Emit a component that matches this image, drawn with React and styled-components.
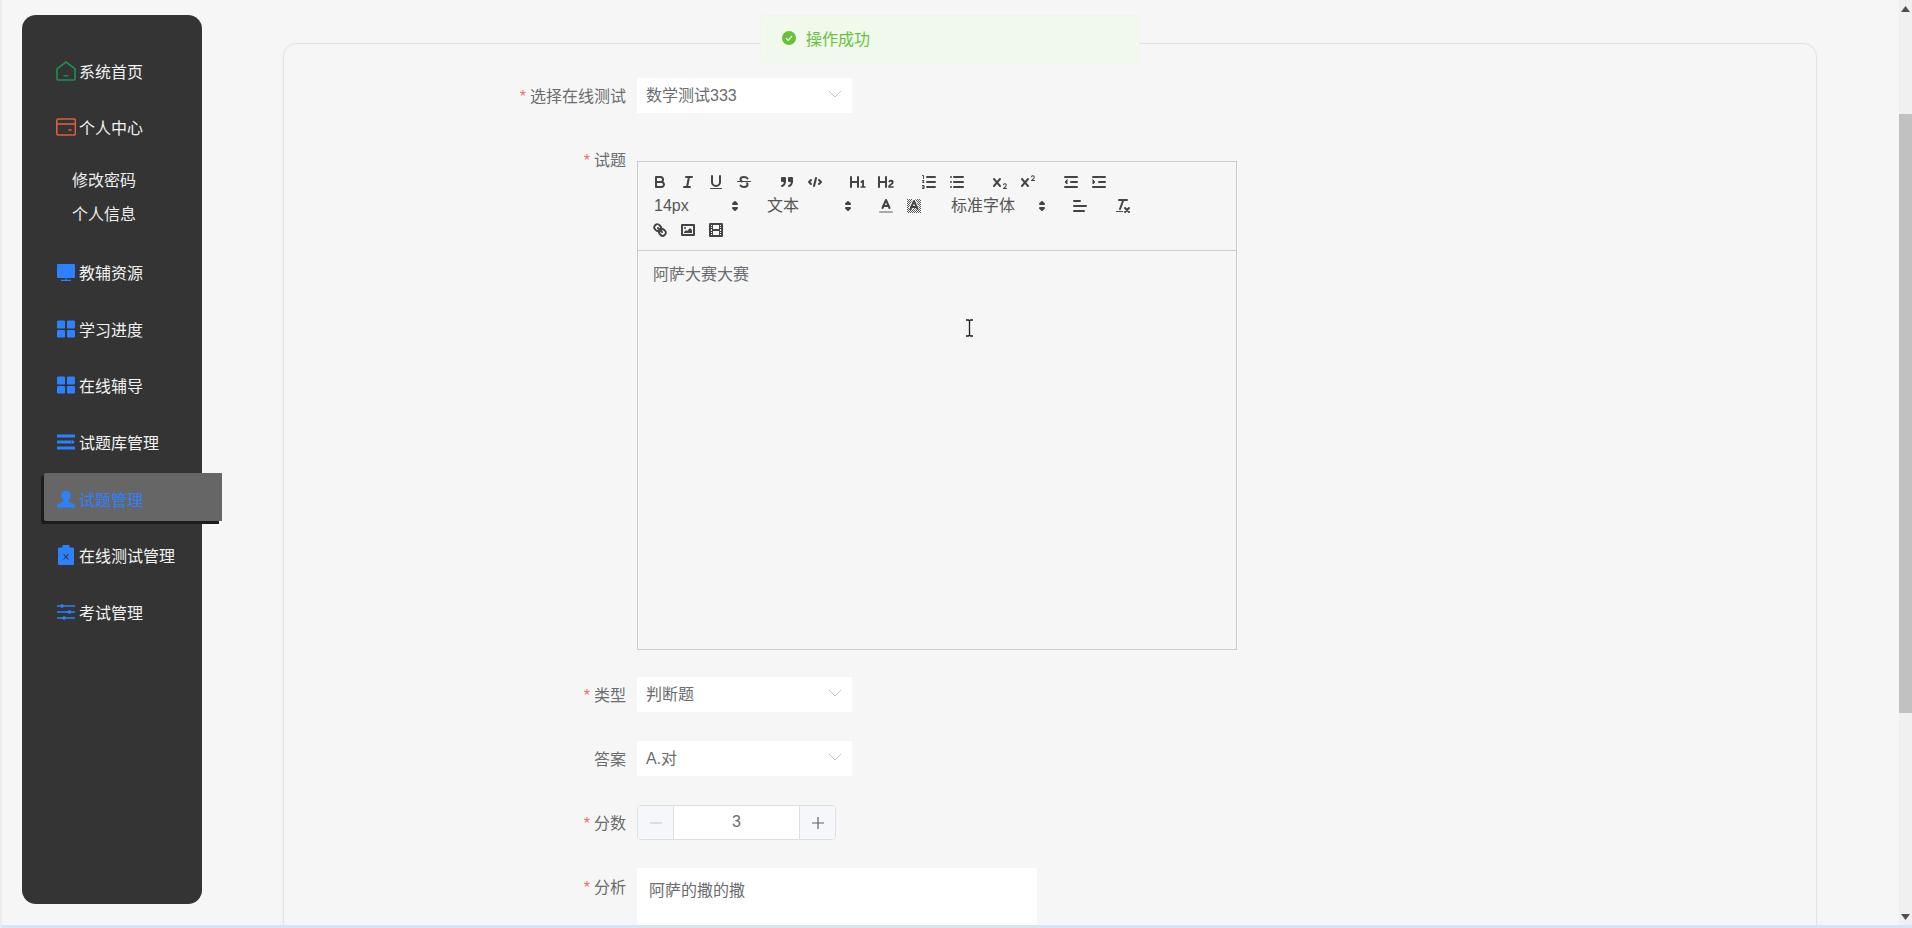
import styled, { createGlobalStyle } from "styled-components";

const GlobalStyle = createGlobalStyle`
  html, body {
    margin: 0;
    height: 100%;
    overflow: hidden;
    background: #f6f6f6;
  }
  * {
    box-sizing: border-box;
  }
`;

const FONT = `"Liberation Sans", "Noto Sans CJK SC", sans-serif`;

const Page = styled.div`
  position: relative;
  width: 1912px;
  height: 928px;
  display: flex;
  flex-direction: column;
  overflow: hidden;
  background: #f6f6f6;
  border-left: 2px solid #ececec;
  font-family: ${FONT};
  font-size: 16px;
  color: #6a6c70;
`;
const Content = styled.div`
  flex: 1;
  min-height: 0;
  display: flex;
  padding-left: 20px;
`;
const BottomStripe = styled.div`
  height: 3px;
  background: #d6e6f2;
`;

/* sidebar */
const Sidebar = styled.nav`
  flex: 0 0 180px;
  width: 180px;
  min-width: 0;
  height: 889px;
  margin-top: 15px;
  padding-top: 30px;
  background: #343434;
  border-radius: 14px;
`;
const MenuItem = styled.div`
  width: 178px;
  height: ${(p) => (p.$active ? "48px" : "51px")};
  margin: 0 0 ${(p) => (p.$active ? "8.6px" : "5.6px")} 22px;
  padding-left: 12px;
  display: flex;
  align-items: center;
  gap: 3px;
  padding-top: ${(p) => (p.$active ? "5px" : "0")};
  color: ${(p) => (p.$active ? "#2d81ff" : "#f2f2f2")};
  background: ${(p) => (p.$active ? "#666666" : "transparent")};
  box-shadow: ${(p) => (p.$active ? "-3px 3px 0 #1c1c1c" : "none")};
  border-radius: ${(p) => (p.$active ? "2px 0 0 2px" : "0")};
`;
const SubMenu = styled.div`
  padding: 11px 0 15px 50px;
  margin-top: -5.6px;
`;
const SubItem = styled.div`
  height: 34px;
  line-height: 34px;
  color: #eeeeee;
`;
const NavIcon = styled.svg`
  flex: 0 0 20px;
  width: 20px;
  height: 20px;
  color: ${(p) => p.$color || "#2d81ff"};
`;

/* form card */
const Main = styled.main`
  flex: 0 0 1534px;
  margin: 28px 0 0 81px;
  padding-top: 15px;
`;
const Card = styled.section`
  height: 100%;
  padding-top: 34px;
  border: 1px solid #e3e3e3;
  border-bottom: none;
  border-radius: 14px 14px 0 0;
  box-shadow: 0 0 3px #efefef;
`;
const Row = styled.div`
  display: flex;
  align-items: ${(p) => (p.$top ? "flex-start" : "center")};
  margin-bottom: ${(p) => p.$gap || 28}px;
`;
const Label = styled.label`
  flex: 0 0 353px;
  text-align: right;
  padding-right: 11px;
  line-height: ${(p) => (p.$top === undefined ? "normal" : "0")};
  padding-top: ${(p) => p.$top || 0}px;
  padding-bottom: ${(p) => (p.$top === undefined ? "2px" : "0")};
`;
const Star = styled.span`
  color: #f56c6c;
  margin-right: 4px;
`;
const Select = styled.div`
  width: 215px;
  height: 35px;
  padding: 0 10px 4px 9px;
  display: flex;
  align-items: center;
  justify-content: space-between;
  background: #ffffff;
`;

/* rich text editor */
const Editor = styled.div`
  width: 600px;
  height: 489px;
  display: flex;
  flex-direction: column;
  border: 1px solid #cccccc;
`;
const Toolbar = styled.div`
  padding: 8px;
  border-bottom: 1px solid #cccccc;
`;
const ToolRow = styled.div`
  display: flex;
  gap: 15px;
  height: 24px;
`;
const ToolGroup = styled.div`
  display: flex;
`;
const ToolButton = styled.span`
  width: 28px;
  height: 24px;
  padding: 3px 5px;
  display: block;
`;
const QlIcon = styled.svg`
  display: block;
  width: 18px;
  height: 18px;
  .s {
    fill: none;
    stroke: #444444;
    stroke-width: 2;
    stroke-linecap: round;
    stroke-linejoin: round;
  }
  .t {
    fill: none;
    stroke: #444444;
    stroke-width: 1;
    stroke-linecap: round;
    stroke-linejoin: round;
  }
  .f {
    fill: #444444;
  }
`;
const Picker = styled.div`
  position: relative;
  width: ${(p) => p.$width}px;
  height: 24px;
  line-height: 24px;
  padding-left: 8px;
  color: #555555;
  svg {
    position: absolute;
    right: 0;
    top: 3px;
  }
`;
const EditorBody = styled.div`
  position: relative;
  flex: 1;
  padding: 12px 15px;
  line-height: 24px;
`;
const TextCursor = styled.svg`
  position: absolute;
  left: 327px;
  top: 68px;
  width: 9px;
  height: 18px;
`;

/* number input */
const NumberBox = styled.div`
  width: 199px;
  height: 35px;
  display: flex;
  border: 1px solid #dcdfe6;
  border-radius: 4px;
  overflow: hidden;
  background: #ffffff;
`;
const StepButton = styled.div`
  flex: 0 0 36px;
  display: flex;
  align-items: center;
  justify-content: center;
  background: #f5f7fa;
  color: ${(p) => (p.$disabled ? "#c0c4cc" : "#606266")};
  ${(p) => (p.$side === "left" ? "border-right" : "border-left")}: 1px solid #dcdfe6;
`;
const NumberValue = styled.div`
  flex: 1;
  text-align: center;
  line-height: 31px;
`;
const TextArea = styled.div`
  width: 400px;
  height: 100px;
  padding: 11px 12px;
  line-height: 24px;
  background: #ffffff;
`;

/* window scrollbar */
const Scrollbar = styled.div`
  flex: 0 0 13px;
  margin-left: auto;
  display: flex;
  flex-direction: column;
  background: #f0f0f0;
`;
const ScrollArrow = styled.div`
  flex: 0 0 17px;
  display: flex;
  align-items: center;
  justify-content: center;
`;
const ScrollTrack = styled.div`
  flex: 1;
  padding-top: 97px;
`;
const ScrollThumb = styled.div`
  height: 599px;
  background: #c1c1c1;
`;

/* message toast */
const Toast = styled.div`
  position: absolute;
  left: 758px;
  top: 15px;
  width: 379px;
  height: 48px;
  padding: 0 0 2px 20px;
  display: flex;
  align-items: center;
  gap: 9px;
  color: #67c23a;
  background: #f0f9eb;
  border: 1px solid #eef7e8;
  border-radius: 4px;
`;

const Chevron = () => (
  <svg width="14" height="14" viewBox="0 0 14 14">
    <path d="M1 4l6 6 6-6" fill="none" stroke="#c0c4cc" strokeWidth="1" />
  </svg>
);

const NavSvg = ({ color, children }) => (
  <NavIcon $color={color} viewBox="0 0 20 20">
    {children}
  </NavIcon>
);

const HomeIcon = () => (
  <NavSvg color="#1e9150">
    <path d="M10 1 19 7.800V18a1 1 0 0 1-1 1H2a1 1 0 0 1-1-1V7.800Z" fill="none" stroke="currentColor" strokeWidth="1.600" strokeLinejoin="round" />
    <path d="M7.500 14.200c1.500.9 3.500.9 5 0" fill="none" stroke="currentColor" strokeWidth="1.300" />
  </NavSvg>
);
const CardIcon = () => (
  <NavSvg color="#d9603b">
    <rect x="0.800" y="2" width="18.600" height="16" rx="1.600" fill="none" stroke="currentColor" strokeWidth="1.600" />
    <path d="M1 7h18" stroke="currentColor" strokeWidth="1.600" />
    <path d="M12.500 13h3" stroke="currentColor" strokeWidth="1.600" />
  </NavSvg>
);
const MonitorIcon = () => (
  <NavSvg>
    <path d="M2 2h16a1 1 0 0 1 1 1v12a1 1 0 0 1-1 1H2a1 1 0 0 1-1-1V3a1 1 0 0 1 1-1Z" fill="currentColor" />
    <path d="M10 16v2M5 18.400h10" stroke="currentColor" strokeWidth="1.100" />
  </NavSvg>
);
const GridIcon = () => (
  <NavSvg>
    <rect x="1" y="1.500" width="8" height="8" rx="1.200" fill="currentColor" />
    <rect x="11" y="1.500" width="8" height="8" rx="1.200" fill="currentColor" />
    <rect x="1" y="11" width="8" height="7.500" rx="1.200" fill="currentColor" />
    <rect x="11" y="11" width="8" height="7.500" rx="1.200" fill="currentColor" />
  </NavSvg>
);
const ListIcon = () => (
  <NavSvg>
    <path d="M1 2.500h18v3H1ZM1 8.500h14v3H1ZM1 14.500h18v3H1Z" fill="currentColor" />
    <path d="M15.500 7.500 19 10l-3.500 2.500Z" fill="currentColor" />
  </NavSvg>
);
const UserIcon = () => (
  <NavSvg>
    <circle cx="10" cy="6.500" r="4.800" fill="currentColor" />
    <path d="M7.600 10.500h4.800l.6 2.500 5 2c.7.3 1 .9 1 1.600V18.500H.9V16.600c0-.7.3-1.300 1-1.600l5-2Z" fill="currentColor" />
  </NavSvg>
);
const ClipboardIcon = () => (
  <NavSvg>
    <path d="M6.500 0h7v3h-7Z" fill="currentColor" />
    <rect x="2" y="2.500" width="16" height="17.500" rx="1" fill="currentColor" />
    <path d="M7.500 9l5 5.500M12.500 9l-5 5.500" stroke="#343434" strokeWidth="1.100" />
  </NavSvg>
);
const SlidersIcon = () => (
  <NavSvg>
    <path d="M1 4h18M1 10h18M1 16h18" stroke="currentColor" strokeWidth="1.300" />
    <rect x="4.500" y="2.300" width="3" height="3.400" rx="1" fill="currentColor" />
    <rect x="12" y="8.300" width="3" height="3.400" rx="1" fill="currentColor" />
    <rect x="6.500" y="14.300" width="3" height="3.400" rx="1" fill="currentColor" />
  </NavSvg>
);

const Ql = ({ children }) => (
  <ToolButton>
    <QlIcon viewBox="0 0 18 18">{children}</QlIcon>
  </ToolButton>
);

const PickerArrows = () => (
  <QlIcon viewBox="0 0 18 18">
    <polygon className="s f" points="7 11 9 13 11 11 7 11" />
    <polygon className="s f" points="7 7 9 5 11 7 7 7" />
  </QlIcon>
);

const X_MARK = "M9.65,5.241a1,1,0,0,0-1.409.108L6,7.964,3.759,5.349A1,1,0,0,0,2.192,6.59178Q2.21541,6.6213,2.241,6.649L4.684,9.5,2.241,12.35A1,1,0,0,0,3.71,13.70722q0.02557-.02768.049-0.05722L6,11.036,8.241,13.65a1,1,0,1,0,1.567-1.24277Q9.78459,12.3777,9.759,12.35L7.316,9.5,9.759,6.651A1,1,0,0,0,9.65,5.241Z";

const menu = [
  { label: "教辅资源", icon: <MonitorIcon /> },
  { label: "学习进度", icon: <GridIcon /> },
  { label: "在线辅导", icon: <GridIcon /> },
  { label: "试题库管理", icon: <ListIcon /> },
  { label: "试题管理", icon: <UserIcon />, active: true },
  { label: "在线测试管理", icon: <ClipboardIcon /> },
  { label: "考试管理", icon: <SlidersIcon /> },
];

const RequiredLabel = ({ required, top, children }) => (
  <Label $top={top}>
    {required && <Star>*</Star>}
    {children}
  </Label>
);

const App = () => {
  return (
    <Page>
      <GlobalStyle />
      <Content>
        <Sidebar>
          <MenuItem>
            <HomeIcon />
            系统首页
          </MenuItem>
          <MenuItem>
            <CardIcon />
            个人中心
          </MenuItem>
          <SubMenu>
            <SubItem>修改密码</SubItem>
            <SubItem>个人信息</SubItem>
          </SubMenu>
          {menu.map((item) => (
            <MenuItem key={item.label} $active={item.active}>
              {item.icon}
              {item.label}
            </MenuItem>
          ))}
        </Sidebar>

        <Main>
          <Card>
            <Row $gap={48}>
              <RequiredLabel required>选择在线测试</RequiredLabel>
              <Select>
                数学测试333
                <Chevron />
              </Select>
            </Row>

            <Row $top $gap={27}>
              <RequiredLabel required top={0}>
                试题
              </RequiredLabel>
              <Editor>
                <Toolbar>
                  <ToolRow>
                    <ToolGroup>
                      <Ql>
                        <path className="s" d="M5,4H9.5A2.5,2.5,0,0,1,12,6.5v0A2.5,2.5,0,0,1,9.5,9H5A0,0,0,0,1,5,9V4A0,0,0,0,1,5,4Z" />
                        <path className="s" d="M5,9h5.5A2.5,2.5,0,0,1,13,11.5v0A2.5,2.5,0,0,1,10.5,14H5a0,0,0,0,1,0,0V9A0,0,0,0,1,5,9Z" />
                      </Ql>
                      <Ql>
                        <path className="s" d="M7 4h6M5 14h6M8 14l2-10" />
                      </Ql>
                      <Ql>
                        <path className="s" d="M5,3V9a4.006,4.006,0,0,0,4,4H9a4.006,4.006,0,0,0,4-4V3" />
                        <rect className="f" x="3" y="15" width="12" height="1" rx="0.5" />
                      </Ql>
                      <Ql>
                        <path className="t" d="M15.5 8.500h-13" />
                        <path className="s" d="M12.500 5.500C11.800 4.400 10.500 4 9 4 7 4 5.500 4.900 5.500 6.400c0 .8.400 1.500 1.200 2M5.500 12.500C6.200 13.600 7.500 14 9 14c2 0 3.500-.9 3.500-2.400 0-.5-.1-1-.4-1.400" />
                      </Ql>
                    </ToolGroup>
                    <ToolGroup>
                      <Ql>
                        <rect className="s f" x="4" y="5" width="3" height="3" />
                        <rect className="s f" x="11" y="5" width="3" height="3" />
                        <path className="s" d="M7,8c0,4.031-3,5-3,5" />
                        <path className="s" d="M14,8c0,4.031-3,5-3,5" />
                      </Ql>
                      <Ql>
                        <polyline className="s" points="5 7 3 9 5 11" />
                        <polyline className="s" points="13 7 15 9 13 11" />
                        <line className="s" x1="10" x2="8" y1="5" y2="13" />
                      </Ql>
                    </ToolGroup>
                    <ToolGroup>
                      <Ql>
                        <path className="f" d="M10,4V14a1,1,0,0,1-2,0V10H3v4a1,1,0,0,1-2,0V4A1,1,0,0,1,3,4V8H8V4a1,1,0,0,1,2,0Zm6.06787,9.209H14.98975V7.59863a.54085.54085,0,0,0-.605-.60547h-.62744a1.01119,1.01119,0,0,0-.748.29688L11.645,8.56641a.5435.5435,0,0,0-.022.8584l.28613.30762a.53861.53861,0,0,0,.84717.0332l.09912-.08789a1.2137,1.2137,0,0,0,.2417-.35254h.02246s-.01123.30859-.01123.60547V13.209H12.041a.54085.54085,0,0,0-.605.60547v.43945a.54085.54085,0,0,0,.605.60547h4.02686a.54085.54085,0,0,0,.605-.60547v-.43945A.54085.54085,0,0,0,16.06787,13.209Z" />
                      </Ql>
                      <Ql>
                        <path className="f" d="M16.73975,13.81445v.43945a.54085.54085,0,0,1-.605.60547H11.855a.58392.58392,0,0,1-.64893-.60547V14.0127c0-2.90527,3.39941-3.42187,3.39941-4.55469a.77675.77675,0,0,0-.84717-.78125,1.17684,1.17684,0,0,0-.83594.38477c-.2749.26367-.561.374-.85791.13184l-.4292-.34082c-.30811-.24219-.38525-.51758-.1543-.81445a2.97155,2.97155,0,0,1,2.45361-1.17676,2.45393,2.45393,0,0,1,2.68408,2.40918c0,2.45312-3.1792,2.92676-3.27832,3.93848h2.79443A.54085.54085,0,0,1,16.73975,13.81445ZM9,3A.99974.99974,0,0,0,8,4V8H3V4A1,1,0,0,0,1,4V14a1,1,0,0,0,2,0V10H8v4a1,1,0,0,0,2,0V4A.99974.99974,0,0,0,9,3Z" />
                      </Ql>
                    </ToolGroup>
                    <ToolGroup>
                      <Ql>
                        <path className="s" d="M7 4h8M7 9h8M7 14h8" />
                        <path className="t" d="M2.500 2.500h1v3M2.500 7.500h1.500l-1.500 2h1.500M2.500 12.500h1.500v3h-1.500M2.500 14h1.500" />
                      </Ql>
                      <Ql>
                        <path className="s" d="M6 4h9M6 9h9M6 14h9M3 4h0M3 9h0M3 14h0" />
                      </Ql>
                    </ToolGroup>
                    <ToolGroup>
                      <Ql>
                        <path className="f" d="M15.5,15H13.861a3.858,3.858,0,0,0,1.914-2.975,1.8,1.8,0,0,0-1.6-1.751A1.921,1.921,0,0,0,12.021,11.7a0.50013,0.50013,0,1,0,.957.291h0a0.914,0.914,0,0,1,1.053-.725,0.81,0.81,0,0,1,.744.762c0,1.076-1.16971,1.86982-1.93971,2.43082A1.45639,1.45639,0,0,0,12,15.5a0.5,0.5,0,0,0,.5.5h3A0.5,0.5,0,0,0,15.5,15Z" />
                        <path className="f" d={X_MARK} />
                      </Ql>
                      <Ql>
                        <path className="f" d="M15.5,7H13.861a4.015,4.015,0,0,0,1.914-2.975,1.8,1.8,0,0,0-1.6-1.751A1.922,1.922,0,0,0,12.021,3.7a0.5,0.5,0,1,0,.957.291,0.917,0.917,0,0,1,1.053-.725,0.81,0.81,0,0,1,.744.762c0,1.077-1.164,1.925-1.934,2.486A1.423,1.423,0,0,0,12,7.5a0.5,0.5,0,0,0,.5.5h3A0.5,0.5,0,0,0,15.5,7Z" />
                        <path className="f" d={X_MARK} />
                      </Ql>
                    </ToolGroup>
                    <ToolGroup>
                      <Ql>
                        <path className="s" d="M3 14h12M3 4h12M9 9h6" />
                        <polygon className="t f" points="5 7 5 11 3 9 5 7" />
                      </Ql>
                      <Ql>
                        <path className="s" d="M3 14h12M3 4h12M9 9h6" />
                        <polygon className="t f" points="3 7 3 11 5 9 3 7" />
                      </Ql>
                    </ToolGroup>
                  </ToolRow>

                  <ToolRow>
                    <Picker $width={98}>
                      14px
                      <PickerArrows />
                    </Picker>
                    <Picker $width={98}>
                      文本
                      <PickerArrows />
                    </Picker>
                    <ToolGroup>
                      <Ql>
                        <line x1="3" x2="15" y1="15" y2="15" stroke="#aaaaaa" strokeWidth="2" strokeLinecap="round" />
                        <polyline className="s" points="5.500 11 9 3 12.500 11" />
                        <line className="s" x1="11.630" x2="6.380" y1="9" y2="9" />
                      </Ql>
                      <Ql>
                        <defs>
                          <pattern id="hatch" width="2" height="2" patternUnits="userSpaceOnUse">
                            <rect width="1" height="1" fill="#555555" />
                            <rect x="1" y="1" width="1" height="1" fill="#555555" />
                          </pattern>
                        </defs>
                        <rect x="2" y="2" width="14" height="14" fill="url(#hatch)" />
                        <polyline points="5.500 12 9 4 12.500 12" fill="none" stroke="#f6f6f6" strokeWidth="4" />
                        <polyline className="s" points="5.500 12 9 4 12.500 12" />
                        <line className="s" x1="11.630" x2="6.380" y1="10" y2="10" />
                      </Ql>
                    </ToolGroup>
                    <Picker $width={108}>
                      标准字体
                      <PickerArrows />
                    </Picker>
                    <ToolGroup>
                      <Ql>
                        <path className="s" d="M3 9h12M3 14h10M3 4h6" />
                      </Ql>
                    </ToolGroup>
                    <ToolGroup>
                      <Ql>
                        <path className="s" d="M5 3h8M6 12 9.350 3M11 11l4 4M15 11l-4 4" />
                        <rect className="f" x="2" y="14" width="7" height="1" rx="0.5" />
                      </Ql>
                    </ToolGroup>
                  </ToolRow>

                  <ToolRow>
                    <ToolGroup>
                      <Ql>
                        <line className="s" x1="7" x2="11" y1="7" y2="11" />
                        <path className="s" d="M8.900,4.577a3.476,3.476,0,0,1,.36,4.679A3.476,3.476,0,0,1,4.577,8.900C3.185,7.500,2.035,6.400,4.217,4.217S7.500,3.185,8.900,4.577Z" />
                        <path className="s" d="M13.423,9.100a3.476,3.476,0,0,0-4.679-.36,3.476,3.476,0,0,0,.36,4.679c1.392,1.392,2.500,2.542,4.679.36S14.815,10.500,13.423,9.100Z" />
                      </Ql>
                      <Ql>
                        <rect className="s" x="3" y="4" width="12" height="10" />
                        <circle className="f" cx="6" cy="7" r="1" />
                        <polyline className="f" points="5 12 5 11 7 9 8 10 11 7 13 9 13 12 5 12" />
                      </Ql>
                      <Ql>
                        <rect className="s" x="3" y="3" width="12" height="12" />
                        <rect className="f" x="5" y="3" width="1" height="12" />
                        <rect className="f" x="12" y="3" width="1" height="12" />
                        <rect className="f" x="5" y="8" width="8" height="2" />
                        <rect className="f" x="3" y="5" width="3" height="1" />
                        <rect className="f" x="3" y="7" width="3" height="1" />
                        <rect className="f" x="3" y="10" width="3" height="1" />
                        <rect className="f" x="3" y="12" width="3" height="1" />
                        <rect className="f" x="12" y="5" width="3" height="1" />
                        <rect className="f" x="12" y="7" width="3" height="1" />
                        <rect className="f" x="12" y="10" width="3" height="1" />
                        <rect className="f" x="12" y="12" width="3" height="1" />
                      </Ql>
                    </ToolGroup>
                  </ToolRow>
                </Toolbar>
                <EditorBody>
                  阿萨大赛大赛
                  <TextCursor viewBox="0 0 9 18">
                    <path d="M1 1h2.500L4.500 2l1-1H8M4.500 2v14M1 17h2.500l1-1 1 1H8" fill="none" stroke="#222222" strokeWidth="1.300" />
                  </TextCursor>
                </EditorBody>
              </Editor>
            </Row>

            <Row $gap={29}>
              <RequiredLabel required>类型</RequiredLabel>
              <Select>
                判断题
                <Chevron />
              </Select>
            </Row>
            <Row $gap={29}>
              <RequiredLabel>答案</RequiredLabel>
              <Select>
                A.对
                <Chevron />
              </Select>
            </Row>
            <Row>
              <RequiredLabel required>分数</RequiredLabel>
              <NumberBox>
                <StepButton $side="left" $disabled>
                  <svg width="14" height="14" viewBox="0 0 14 14">
                    <path d="M1 7h12" stroke="currentColor" strokeWidth="1.200" />
                  </svg>
                </StepButton>
                <NumberValue>3</NumberValue>
                <StepButton $side="right">
                  <svg width="14" height="14" viewBox="0 0 14 14">
                    <path d="M1 7h12M7 1v12" stroke="currentColor" strokeWidth="1.200" />
                  </svg>
                </StepButton>
              </NumberBox>
            </Row>
            <Row $top>
              <RequiredLabel required top={20}>
                分析
              </RequiredLabel>
              <TextArea>阿萨的撒的撒</TextArea>
            </Row>
          </Card>
        </Main>

        <Scrollbar>
          <ScrollArrow>
            <svg width="9" height="6" viewBox="0 0 9 6">
              <path d="M4.500 0 9 6H0Z" fill="#505050" />
            </svg>
          </ScrollArrow>
          <ScrollTrack>
            <ScrollThumb />
          </ScrollTrack>
          <ScrollArrow>
            <svg width="9" height="6" viewBox="0 0 9 6">
              <path d="M0 0h9L4.500 6Z" fill="#505050" />
            </svg>
          </ScrollArrow>
        </Scrollbar>
      </Content>
      <BottomStripe />

      <Toast>
        <svg width="16" height="16" viewBox="0 0 16 16">
          <circle cx="8" cy="8" r="7" fill="#67c23a" />
          <path d="M5 8.200 7.200 10.300 11 6" fill="none" stroke="#f0f9eb" strokeWidth="1.200" />
        </svg>
        操作成功
      </Toast>
    </Page>
  );
};

export default App;
